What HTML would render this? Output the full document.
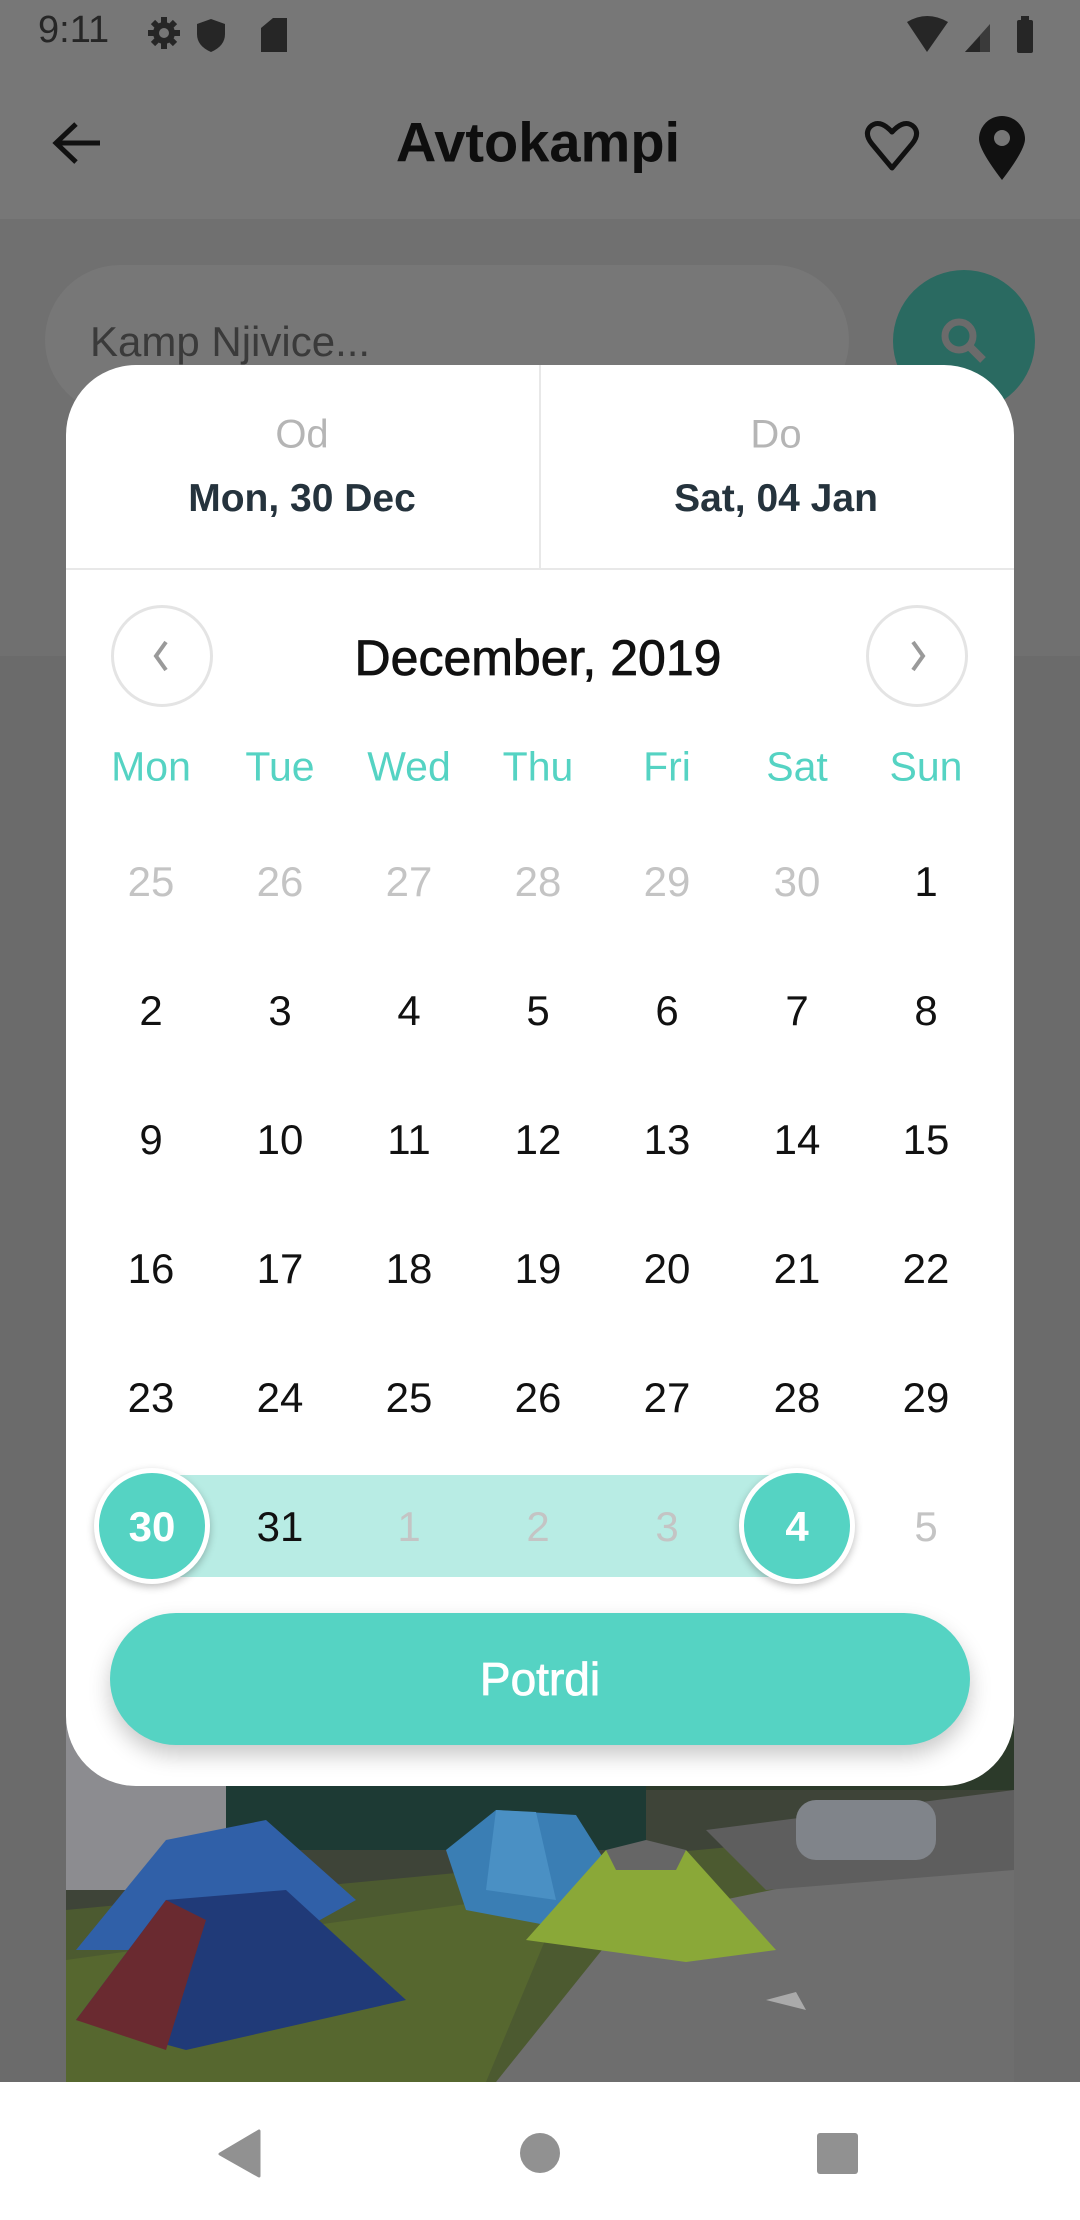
<!DOCTYPE html>
<html><head><meta charset="utf-8"><style>
*{margin:0;padding:0;box-sizing:border-box}
body{width:1080px;height:2220px;position:relative;overflow:hidden;background:#6f6f6f;font-family:"Liberation Sans",sans-serif}
.a{position:absolute}
.c{position:absolute;transform:translate(-50%,-50%);white-space:nowrap;text-align:center}
.d{font-size:42px;color:#111}
.g{color:#c4c4c4}
.w{font-size:41px;color:#55d3c3}
</style></head><body>
<div class="a" style="left:0;top:0;width:1080px;height:219px;background:#777"></div>
<div class="a" style="left:0;top:219px;width:1080px;height:437px;background:#707070"></div>
<div class="a" style="left:0;top:656px;width:1080px;height:1431px;background:#6b6b6b"></div>
<div class="a" style="left:38px;top:9px;font-size:38px;color:#262626">9:11</div>
<svg class="a" style="left:145px;top:14px" width="160" height="40" viewBox="0 0 160 40">
<circle cx="19" cy="19" r="11" fill="#262626"/>
<g stroke="#262626" stroke-width="6"><line x1="19" y1="3" x2="19" y2="35"/><line x1="3" y1="19" x2="35" y2="19"/><line x1="8" y1="8" x2="30" y2="30"/><line x1="30" y1="8" x2="8" y2="30"/></g>
<circle cx="19" cy="19" r="5" fill="#777"/>
<path d="M66 5 L80 10 L80 20 Q80 32 66 38 Q52 32 52 20 L52 10 Z" fill="#262626"/>
<path d="M128 4 L142 4 L142 38 L116 38 L116 14 Z" fill="#262626"/>
</svg>
<svg class="a" style="left:905px;top:14px" width="140" height="40" viewBox="0 0 140 40">
<path d="M2 8 Q22 -4 43 8 L22 38 Z" fill="#262626"/>
<path d="M60 38 L85 10 L85 38 Z" fill="#3a3a3a"/><path d="M60 38 L75 22 L75 38 Z" fill="#262626"/>
<rect x="112" y="6" width="16" height="33" rx="2" fill="#262626"/><rect x="116" y="2" width="8" height="5" fill="#262626"/>
</svg>
<svg class="a" style="left:50px;top:118px" width="56" height="50" viewBox="0 0 56 50"><path d="M50 25 H8 M26 6 L6 25 L26 44" stroke="#111" stroke-width="5" fill="none"/></svg>
<div class="c" style="left:538px;top:142px;font-size:56px;font-weight:bold;color:#0e0e0e">Avtokampi</div>
<svg class="a" style="left:864px;top:118px" width="56" height="54" viewBox="0 0 56 54"><path d="M28 50 L8 26 Q0 16 6 9 Q15 0 28 14 Q41 0 50 9 Q56 16 48 26 Z" stroke="#111" stroke-width="5" fill="none" stroke-linejoin="round"/></svg>
<svg class="a" style="left:975px;top:114px" width="54" height="68" viewBox="0 0 54 68"><path d="M27 66 Q4 36 4 25 A23 23 0 0 1 50 25 Q50 36 27 66 Z" fill="#111"/><circle cx="27" cy="24" r="8" fill="#777"/></svg>
<div class="a" style="left:45px;top:265px;width:804px;height:150px;border-radius:75px;background:#777"></div>
<div class="a" style="left:90px;top:318px;font-size:42px;color:#3a3a3a">Kamp Njivice...</div>
<div class="a" style="left:893px;top:270px;width:142px;height:142px;border-radius:50%;background:#2a6a61"></div>
<svg class="a" style="left:935px;top:312px" width="60" height="60" viewBox="0 0 60 60"><circle cx="24" cy="24" r="14" stroke="#6b6b6b" stroke-width="7" fill="none"/><line x1="34" y1="34" x2="48" y2="48" stroke="#6b6b6b" stroke-width="8"/></svg>
<svg class="a" style="left:66px;top:1700px" width="948" height="382" viewBox="0 0 948 382">
<rect width="948" height="382" fill="#3e4438"/>
<rect x="0" y="0" width="948" height="90" fill="#2c3a2a"/>
<rect x="0" y="0" width="160" height="190" fill="#8c8c90"/>
<rect x="25" y="0" width="110" height="40" fill="#30334a"/>
<rect x="160" y="20" width="420" height="130" fill="#1d3a34"/>
<rect x="560" y="10" width="120" height="60" fill="#9a9a98"/>
<rect x="690" y="20" width="240" height="40" fill="#8a8e92"/>
<polygon points="0,210 948,120 948,382 0,382" fill="#4c5a30"/>
<polygon points="0,260 500,190 420,382 0,382" fill="#56672f"/>
<polygon points="560,220 948,140 948,382 430,382" fill="#6e6e6e"/>
<polygon points="640,130 948,90 948,170 700,190" fill="#5e5e5e"/>
<polygon points="700,300 730,292 740,310" fill="#aaa"/>
<rect x="730" y="100" width="140" height="60" rx="20" fill="#80848a"/>
<polygon points="10,250 100,140 200,120 290,200 200,250" fill="#3060a8"/>
<polygon points="10,320 100,200 220,190 340,300 120,350" fill="#203a78"/>
<polygon points="10,320 100,200 140,220 100,350" fill="#6a2a30"/>
<polygon points="380,150 430,110 510,115 570,210 480,225 400,210" fill="#3a7eb4"/>
<polygon points="430,110 470,112 490,200 420,190" fill="#4a90c4"/>
<polygon points="460,240 540,150 620,150 710,250 620,262" fill="#8aa838"/>
<polygon points="540,150 580,140 620,150 610,170 550,170" fill="#666"/>
</svg>
<div class="a" style="left:0;top:2082px;width:1080px;height:138px;background:#fff"></div>
<svg class="a" style="left:0;top:2120px" width="1080" height="70" viewBox="0 0 1080 70">
<path d="M259 11 L259 56 L220 34 Z" fill="#919191" stroke="#919191" stroke-width="3" stroke-linejoin="round"/>
<circle cx="540" cy="33" r="20" fill="#919191"/>
<rect x="817" y="13" width="41" height="41" rx="3" fill="#919191"/>
</svg>
<div class="a" style="left:66px;top:365px;width:948px;height:1421px;background:#fff;border-radius:70px"></div>
<div class="a" style="left:66px;top:568px;width:948px;height:2px;background:#e8e8e8"></div>
<div class="a" style="left:539px;top:365px;width:2px;height:203px;background:#e8e8e8"></div>
<div class="c" style="left:302px;top:435px;font-size:40px;color:#b5b5b5">Od</div>
<div class="c" style="left:302px;top:499px;font-size:39px;font-weight:bold;color:#25333d">Mon, 30 Dec</div>
<div class="c" style="left:776px;top:435px;font-size:40px;color:#b5b5b5">Do</div>
<div class="c" style="left:776px;top:499px;font-size:39px;font-weight:bold;color:#25333d">Sat, 04 Jan</div>
<div class="a" style="left:111px;top:605px;width:102px;height:102px;border-radius:50%;border:3px solid #e4e4e4"></div>
<div class="a" style="left:866px;top:605px;width:102px;height:102px;border-radius:50%;border:3px solid #e4e4e4"></div>
<svg class="a" style="left:146px;top:636px" width="30" height="40" viewBox="0 0 30 40"><path d="M20 6 L10 20 L20 34" stroke="#9a9a9a" stroke-width="4" fill="none"/></svg>
<svg class="a" style="left:903px;top:636px" width="30" height="40" viewBox="0 0 30 40"><path d="M10 6 L20 20 L10 34" stroke="#9a9a9a" stroke-width="4" fill="none"/></svg>
<div class="c" style="left:538px;top:658px;font-size:50px;color:#111;-webkit-text-stroke:0.8px #111">December, 2019</div>
<div class="c w" style="left:151px;top:767px">Mon</div><div class="c w" style="left:280px;top:767px">Tue</div><div class="c w" style="left:409px;top:767px">Wed</div><div class="c w" style="left:538px;top:767px">Thu</div><div class="c w" style="left:667px;top:767px">Fri</div><div class="c w" style="left:797px;top:767px">Sat</div><div class="c w" style="left:926px;top:767px">Sun</div>
<div class="c d g" style="left:151px;top:882px">25</div><div class="c d g" style="left:280px;top:882px">26</div><div class="c d g" style="left:409px;top:882px">27</div><div class="c d g" style="left:538px;top:882px">28</div><div class="c d g" style="left:667px;top:882px">29</div><div class="c d g" style="left:797px;top:882px">30</div><div class="c d" style="left:926px;top:882px">1</div>
<div class="c d" style="left:151px;top:1011px">2</div><div class="c d" style="left:280px;top:1011px">3</div><div class="c d" style="left:409px;top:1011px">4</div><div class="c d" style="left:538px;top:1011px">5</div><div class="c d" style="left:667px;top:1011px">6</div><div class="c d" style="left:797px;top:1011px">7</div><div class="c d" style="left:926px;top:1011px">8</div>
<div class="c d" style="left:151px;top:1140px">9</div><div class="c d" style="left:280px;top:1140px">10</div><div class="c d" style="left:409px;top:1140px">11</div><div class="c d" style="left:538px;top:1140px">12</div><div class="c d" style="left:667px;top:1140px">13</div><div class="c d" style="left:797px;top:1140px">14</div><div class="c d" style="left:926px;top:1140px">15</div>
<div class="c d" style="left:151px;top:1269px">16</div><div class="c d" style="left:280px;top:1269px">17</div><div class="c d" style="left:409px;top:1269px">18</div><div class="c d" style="left:538px;top:1269px">19</div><div class="c d" style="left:667px;top:1269px">20</div><div class="c d" style="left:797px;top:1269px">21</div><div class="c d" style="left:926px;top:1269px">22</div>
<div class="c d" style="left:151px;top:1398px">23</div><div class="c d" style="left:280px;top:1398px">24</div><div class="c d" style="left:409px;top:1398px">25</div><div class="c d" style="left:538px;top:1398px">26</div><div class="c d" style="left:667px;top:1398px">27</div><div class="c d" style="left:797px;top:1398px">28</div><div class="c d" style="left:926px;top:1398px">29</div>
<div class="a" style="left:152px;top:1475px;width:645px;height:102px;background:#b8ece4"></div>
<div class="a" style="left:94px;top:1468px;width:116px;height:116px;border-radius:50%;background:#55d3c3;border:5px solid #fff;box-shadow:0 3px 8px rgba(0,0,0,.25)"></div>
<div class="a" style="left:739px;top:1468px;width:116px;height:116px;border-radius:50%;background:#55d3c3;border:5px solid #fff;box-shadow:0 3px 8px rgba(0,0,0,.25)"></div>
<div class="c" style="left:152px;top:1527px;font-size:42px;font-weight:bold;color:#fff">30</div>
<div class="c d" style="left:280px;top:1527px">31</div>
<div class="c d g" style="left:409px;top:1527px">1</div><div class="c d g" style="left:538px;top:1527px">2</div><div class="c d g" style="left:667px;top:1527px">3</div>
<div class="c" style="left:797px;top:1527px;font-size:42px;font-weight:bold;color:#fff">4</div>
<div class="c d g" style="left:926px;top:1527px">5</div>
<div class="a" style="left:110px;top:1613px;width:860px;height:132px;border-radius:66px;background:#55d3c3;box-shadow:0 10px 22px rgba(0,0,0,.22)"></div>
<div class="c" style="left:540px;top:1679px;font-size:46px;color:#fff;-webkit-text-stroke:0.8px #fff">Potrdi</div>
</body></html>
